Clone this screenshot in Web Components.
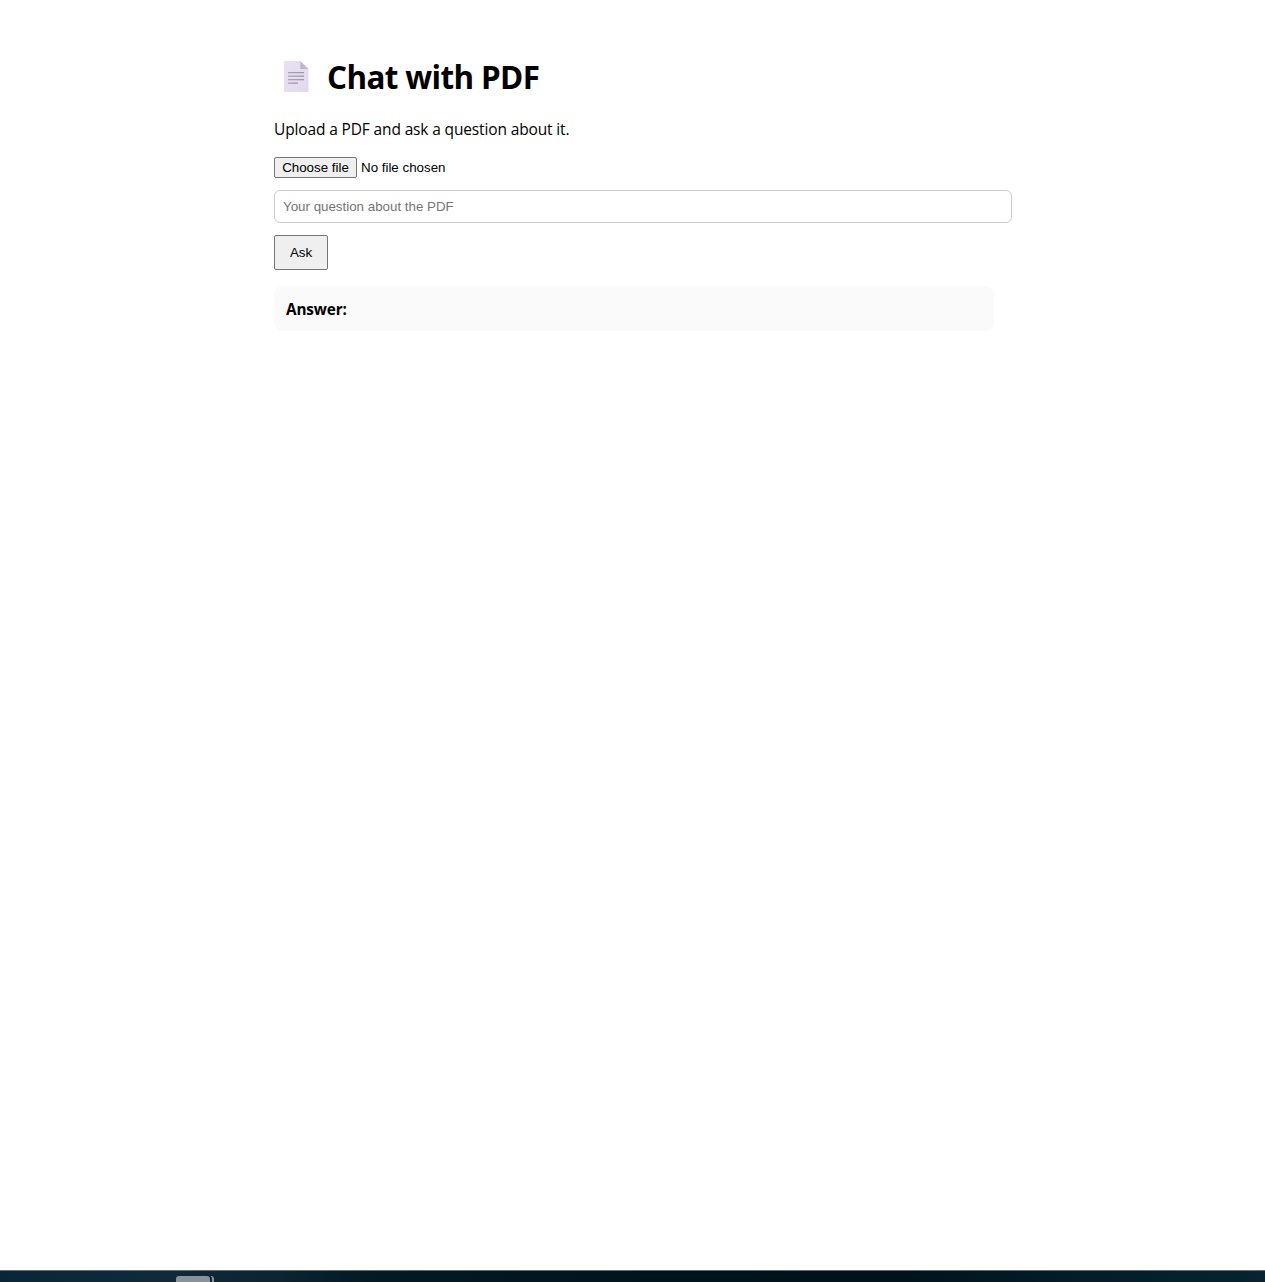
<!DOCTYPE html>
<html lang="en">
<head>
<meta charset="utf-8">
<title>Chat with PDF</title>
<style>
html, body { margin: 0; height: 100%; overflow: hidden; background: #fff; }
body { font-family: "Open Sans", "Noto Sans", sans-serif; color: #000; }
</style>
</head>
<body>
<chat-app></chat-app>
<script>
function define(name, html) {
  const template = document.createElement('template');
  template.innerHTML = html;
  customElements.define(name, class extends HTMLElement {
    constructor() {
      super();
      this.attachShadow({ mode: 'open' }).append(template.content.cloneNode(true));
    }
  });
}

define('page-icon', `
<style>:host { display: block; width: 25px; height: 31px; } svg { display: block; }</style>
<svg width="25" height="31" viewBox="0 0 25 31">
  <defs>
    <linearGradient id="p" x1="0" y1="0" x2="1" y2="1"><stop stop-color="#e9e2f3"/><stop offset="1" stop-color="#e1d8ed"/></linearGradient>
    <linearGradient id="f" x1="0" y1="1" x2="1" y2="0"><stop stop-color="#b5afbd"/><stop offset="1" stop-color="#d4cdda"/></linearGradient>
    <linearGradient id="l"><stop stop-color="#aaa2b5"/><stop offset="1" stop-color="#9e96a9"/></linearGradient>
  </defs>
  <path fill="url(#p)" d="M.7 0H16.3L24.5 8V30.3Q24.5 31 23.8 31H.7Q0 31 0 30.3V.7Q0 0 .7 0Z"/>
  <path fill="url(#f)" d="M16.3 0L24.5 8H17Q16.3 8 16.3 7.3Z"/>
  <g fill="url(#l)"><rect x="4" y="11" width="16" height="1.3"/><rect x="4" y="14.5" width="16" height="1.3"/><rect x="4" y="18" width="16" height="1.3"/><rect x="4" y="21.5" width="10" height="1.3"/></g>
</svg>`);

define('app-title', `
<style>
:host { display: flex; height: 43px; gap: 18px; padding-left: 10px; }
page-icon { margin-top: 6px; }
h1 { margin: 0; font-size: 31.4px; line-height: 43px; font-weight: 700; white-space: nowrap; letter-spacing: -.62px; }
</style><page-icon></page-icon><h1><slot></slot></h1>`);

define('intro-text', `
<style>
:host { display: block; margin-top: 21px; }
p { margin: 0; font-size: 15.5px; line-height: 21px; white-space: nowrap; letter-spacing: -.14px; }
</style><p><slot></slot></p>`);

define('file-picker', `
<style>
:host { display: flex; align-items: center; gap: 4px; height: 21px; margin-top: 17px; font: 13.333px "Liberation Sans", Arial, sans-serif; }
button { box-sizing: border-box; width: 83px; height: 21px; padding: 0; font: inherit; color: #000; background: #efefef; border: 1px solid #767676; border-radius: 2px; white-space: nowrap; }
</style><button type="button">Choose file</button><span><slot></slot></span>`);

define('question-field', `
<style>
:host { display: block; margin-top: 12px; }
input { display: block; box-sizing: border-box; width: 738px; height: 33px; margin: 0; padding: 8px; border: 1px solid #ccc; border-radius: 6px; background: #fff; font: 13.333px "Liberation Sans", Arial, sans-serif; }
input::placeholder { color: #757575; }
</style><input type="text" placeholder="Your question about the PDF">`);

define('ask-button', `
<style>
:host { display: block; margin-top: 12px; }
button { display: block; box-sizing: border-box; width: 54px; height: 35px; padding: 0; font: 13.333px "Liberation Sans", Arial, sans-serif; color: #000; background: #efefef; border: 1px solid #767676; border-radius: 2px; }
</style><button type="button"><slot></slot></button>`);

define('answer-box', `
<style>
:host { display: block; box-sizing: border-box; height: 45px; margin-top: 16px; padding: 13px 12px 11px; border-radius: 8px; background: #fafafa; }
strong { display: block; font-size: 15.3px; line-height: 21px; font-weight: 700; letter-spacing: -.12px; }
</style><strong><slot></slot></strong>`);

define('desktop-edge', `
<style>
:host { display: flex; box-sizing: border-box; flex: none; height: 12px; border-top: 1px solid #686b6e; padding: 5px 0 0 176px; gap: 1px; overflow: hidden;
  background: linear-gradient(90deg, #092638 0, #102a39 170px, #0b2432 280px, #031923 380px, #00141e 650px, #00131d 900px, #031d29 1080px, #04212c 1190px, #092331 1265px); }
i { display: block; box-sizing: border-box; width: 34px; height: 12px; border-radius: 3px 3px 0 0; background: #87929b; }
i + i { width: 3px; border-radius: 0 3px 0 0; background: none; border: solid #87929b; border-width: 1px 2px 0 0; }
</style><i></i><i></i>`);

define('chat-app', `
<style>
:host { display: flex; flex-direction: column; height: 1282px; }
main { flex: 1; width: 720px; margin-left: 274px; padding-top: 55px; }
</style>
<main>
  <app-title>Chat with PDF</app-title>
  <intro-text>Upload a PDF and ask a question about it.</intro-text>
  <file-picker>No file chosen</file-picker>
  <question-field></question-field>
  <ask-button>Ask</ask-button>
  <answer-box>Answer:</answer-box>
</main>
<desktop-edge></desktop-edge>`);
</script>
</body>
</html>
